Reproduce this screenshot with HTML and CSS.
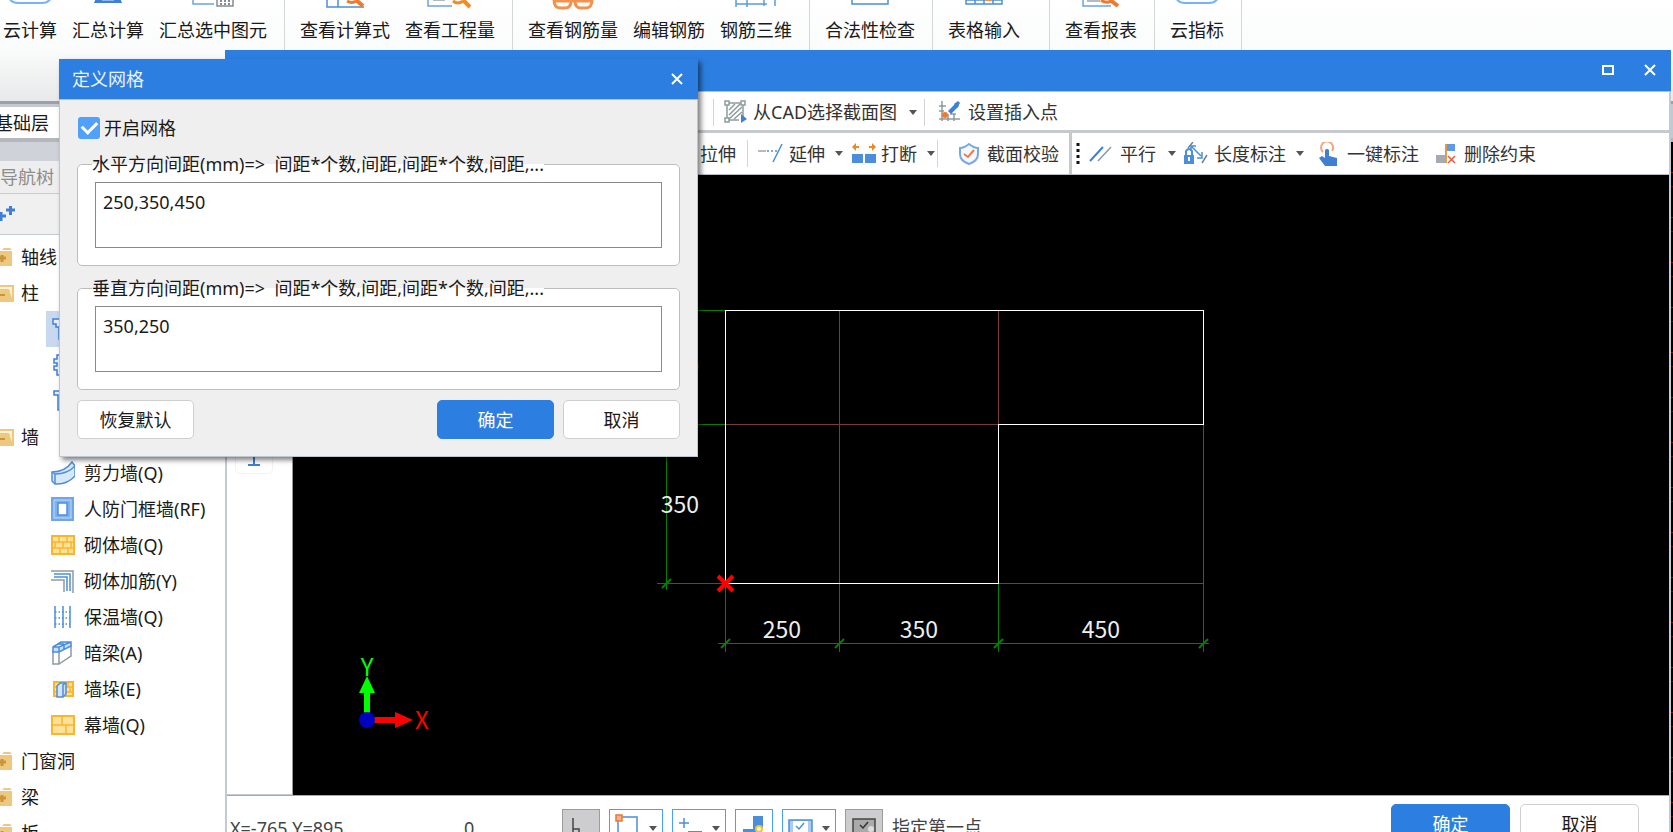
FILE: index.html
```html
<!DOCTYPE html>
<html lang="zh-CN">
<head>
<meta charset="utf-8">
<title>定义网格</title>
<link rel="stylesheet" href="styles.css">
</head>
<body>
<div class="app">
  <header class="ribbon">
    <div class="ribbon-group first">
      <button class="ribbon-btn"><svg width="46" height="10" viewBox="0 0 46 10"><path d="M1-6C2 1 6 3 11 3H35C40 3 44 1 45-6" fill="none" stroke="#74b4fb" stroke-width="2"/></svg><span>云计算</span></button>
      <button class="ribbon-btn"><svg width="30" height="10" viewBox="0 0 30 10"><path d="M3-2H27L29 3H1Z" fill="#3f80d4"/><path d="M9 0H21" stroke="#dbe9fb"/></svg><span>汇总计算</span></button>
      <button class="ribbon-btn"><svg width="42" height="10" viewBox="0 0 42 10"><path d="M1-2V4H22" fill="none" stroke="#6aa3e4" stroke-width="1.5"/><path d="M25-2V6H41V-2" fill="#fff" stroke="#858b96" stroke-width="1.5"/><path d="M28 1H38M28 4H38" stroke="#858b96" stroke-width="2" stroke-dasharray="2 2"/></svg><span>汇总选中图元</span></button>
    </div>
    <div class="ribbon-group">
      <button class="ribbon-btn"><svg width="40" height="10" viewBox="0 0 40 10"><path d="M2-2V7H39M13-2V7" fill="none" stroke="#4b8fdc" stroke-width="1.5"/><path d="M22 1Q27 4 31 1" fill="none" stroke="#ef7a2d" stroke-width="3"/><path d="M31 0L38 6" stroke="#ef7a2d" stroke-width="4"/></svg><span>查看计算式</span></button>
      <button class="ribbon-btn"><svg width="46" height="10" viewBox="0 0 46 10"><path d="M1-2V6H25" fill="none" stroke="#6aa3e4" stroke-width="1.5"/><path d="M6 0H18" stroke="#9aa3ad" stroke-width="1.5"/><path d="M26 1Q31 5 36 1" fill="none" stroke="#f08c22" stroke-width="3"/><path d="M36 0L43 7" stroke="#f08c22" stroke-width="4"/></svg><span>查看工程量</span></button>
    </div>
    <div class="ribbon-group">
      <button class="ribbon-btn"><svg width="42" height="10" viewBox="0 0 42 10"><path d="M2-1C2 6 4 8 9 8H13C18 8 19 5 19 1H23C23 5 24 8 29 8H33C38 8 40 6 40-1M2 1H40" fill="none" stroke="#f2924f" stroke-width="3"/></svg><span>查看钢筋量</span></button>
      <button class="ribbon-btn"><svg width="40" height="10" viewBox="0 0 40 10"></svg><span>编辑钢筋</span></button>
      <button class="ribbon-btn"><svg width="42" height="10" viewBox="0 0 42 10"><path d="M1 4H32M1-1V7M12-1V7M29-1V6M40-1V6" fill="none" stroke="#5b9be3" stroke-width="1.5"/></svg><span>钢筋三维</span></button>
    </div>
    <div class="ribbon-group">
      <button class="ribbon-btn"><svg width="38" height="10" viewBox="0 0 38 10"><path d="M1-2V4H37V-2" fill="none" stroke="#4b8fdc" stroke-width="1.5"/></svg><span>合法性检查</span></button>
    </div>
    <div class="ribbon-group wide">
      <button class="ribbon-btn"><svg width="38" height="10" viewBox="0 0 38 10"><path d="M1-2V4H37V-2M1 0H37M10-2V4M19-2V4M28-2V4" fill="none" stroke="#4b8fdc" stroke-width="1.5"/><path d="M20 0H27" stroke="#f2924f" stroke-width="2"/></svg><span>表格输入</span></button>
    </div>
    <div class="ribbon-group">
      <button class="ribbon-btn"><svg width="38" height="10" viewBox="0 0 38 10"><path d="M1-2V6H29" fill="none" stroke="#6aa3e4" stroke-width="1.5"/><path d="M5 1H18" stroke="#9aa3ad" stroke-width="1.5"/><path d="M19 0Q24 4 29 1" fill="none" stroke="#ef7a2d" stroke-width="3"/><path d="M28 0L36 6" stroke="#ef7a2d" stroke-width="4"/></svg><span>查看报表</span></button>
    </div>
    <div class="ribbon-group">
      <button class="ribbon-btn"><svg width="46" height="10" viewBox="0 0 46 10"><path d="M1-6C2 1 6 3 11 3H35C40 3 44 1 45-6" fill="none" stroke="#74b4fb" stroke-width="2"/></svg><span>云指标</span></button>
    </div>
  </header>

  <div class="floor-bar"><button class="floor">基础层</button></div>

  <div class="workspace">
    <nav class="sidebar">
      <div class="dock-gap"></div>
      <h2 class="nav-title">导航树</h2>
      <div class="nav-tools"><svg width="18" height="18" viewBox="0 0 18 18"><path d="M-4 12H6M1 8V17M6 6H15M10.500 2V11" stroke="#3f80d4" stroke-width="3" fill="none"/></svg></div>
      <ul class="tree">
        <li class="branch"><svg width="14" height="20" viewBox="0 0 14 20"><path d="M0 4H12V19H0ZM2 3L4 1H10L12 3Z" fill="#eec87f"/><path d="M0 11H6M2 8V15" stroke="#c8953a" stroke-width="3"/></svg>轴线</li>
        <li class="branch"><svg width="14" height="20" viewBox="0 0 14 20"><path d="M0 2H14V19H0Z" fill="#eec87f"/><path d="M0 4H12V15L9 6H0Z" fill="#fff4da"/><path d="M0 12H5" stroke="#c8953a" stroke-width="2"/></svg>柱</li>
        <li class="leaf selected" aria-label="柱"><svg width="24" height="24" viewBox="0 0 24 24"><path d="M2 2H20V7H15V22H8V10H5V7H2Z" fill="#e7f1fd" stroke="#3f80d4" stroke-width="1.5"/></svg></li>
        <li class="leaf" aria-label="构造柱"><svg width="24" height="24" viewBox="0 0 24 24"><path d="M6 2H18V7H22V17H18V22H6V17H3V13H6V10H3V6H6Z" fill="#e7f1fd" stroke="#3f80d4" stroke-width="1.500"/></svg></li>
        <li class="leaf" aria-label="砌体柱"><svg width="24" height="24" viewBox="0 0 24 24"><path d="M3 2H20V6H16V21H7V6H3Z" fill="#e7f1fd" stroke="#3f80d4" stroke-width="1.500"/></svg></li>
        <li class="branch"><svg width="14" height="20" viewBox="0 0 14 20"><path d="M0 2H14V19H0Z" fill="#eec87f"/><path d="M0 4H12V15L9 6H0Z" fill="#fff4da"/><path d="M0 12H5" stroke="#c8953a" stroke-width="2"/></svg>墙</li>
        <li class="leaf"><svg width="24" height="24" viewBox="0 0 24 24"><path d="M1 11Q14 11 21 1L24 5V15Q16 24 4 23L1 20Z" fill="#d8e8fb" stroke="#4b8fdc" stroke-width="1.500"/><path d="M1 11L4 13Q17 13 24 5M4 13V23" fill="none" stroke="#4b8fdc" stroke-width="1.500"/></svg>剪力墙(Q)</li>
        <li class="leaf"><svg width="24" height="24" viewBox="0 0 24 24"><rect width="23" height="24" fill="#6ea6ea"/><rect x="3" y="3" width="17" height="18" fill="#7fb0ee" stroke="#c3daf8"/><rect x="7" y="6" width="9" height="12" fill="#fff" stroke="#4b8fdc" stroke-width="1.500"/></svg>人防门框墙(RF)</li>
        <li class="leaf"><svg width="24" height="24" viewBox="0 0 24 24"><rect x="1" y="3" width="22" height="18" fill="#ffe19a" stroke="#fbb52c" stroke-width="2"/><path d="M1 9H23M1 15H23M8 3V9M16 3V9M4 9V15M12 9V15M20 9V15M9 15V21M17 15V21" stroke="#fbb52c" stroke-width="1.500"/></svg>砌体墙(Q)</li>
        <li class="leaf"><svg width="24" height="24" viewBox="0 0 24 24"><path d="M0 2H22V24M0 11H13V23" fill="none" stroke="#8e9a9d" stroke-width="1.500"/><path d="M3 5H19V22M3 8H16V22" fill="none" stroke="#4b8fdc" stroke-width="1.500"/></svg>砌体加筋(Y)</li>
        <li class="leaf"><svg width="24" height="24" viewBox="0 0 24 24"><path d="M4 1V23M12 1V23M19 1V23" stroke="#4b8fdc" stroke-width="1.500"/><path d="M4 7H19M4 13H19M4 19H19" stroke="#4b8fdc" stroke-width="1.500" stroke-dasharray="1.500 2"/></svg>保温墙(Q)</li>
        <li class="leaf"><svg width="24" height="24" viewBox="0 0 24 24"><path d="M2 10H8V23H2ZM8 23L20 15V4" fill="#fff" stroke="#8e9a9d" stroke-width="1.500"/><path d="M2 6L10 1H20V5L8 11H2ZM2 6H8L20 1M6 3L13 3M8 6V11M13 4V8" fill="#c9dff9" stroke="#4b8fdc" stroke-width="1.500"/></svg>暗梁(A)</li>
        <li class="leaf"><svg width="24" height="24" viewBox="0 0 24 24"><rect x="3" y="5" width="19" height="14" fill="#ffe19a" stroke="#fbb52c" stroke-width="2"/><path d="M2 10H22M2 15H22M17 5V10M19 10V15" stroke="#fbb52c" stroke-width="1.500"/><path d="M6 9L9 6H15V17L12 20H6Z" fill="#d2e4fa" stroke="#4b8fdc" stroke-width="1.500"/><path d="M12 20V8L15 6" fill="none" stroke="#4b8fdc" stroke-width="1.500"/></svg>墙垛(E)</li>
        <li class="leaf"><svg width="24" height="24" viewBox="0 0 24 24"><rect x="1" y="3" width="22" height="18" fill="#ffe19a" stroke="#fbb52c" stroke-width="2"/><path d="M1 12H23M11 3V12M15 12V21" stroke="#fbb52c" stroke-width="1.500"/></svg>幕墙(Q)</li>
        <li class="branch"><svg width="14" height="20" viewBox="0 0 14 20"><path d="M0 4H12V19H0ZM2 3L4 1H10L12 3Z" fill="#eec87f"/><path d="M0 11H6M2 8V15" stroke="#c8953a" stroke-width="3"/></svg>门窗洞</li>
        <li class="branch"><svg width="14" height="20" viewBox="0 0 14 20"><path d="M0 4H12V19H0ZM2 3L4 1H10L12 3Z" fill="#eec87f"/><path d="M0 11H6M2 8V15" stroke="#c8953a" stroke-width="3"/></svg>梁</li>
        <li class="branch"><svg width="14" height="20" viewBox="0 0 14 20"><path d="M0 4H12V19H0ZM2 3L4 1H10L12 3Z" fill="#eec87f"/><path d="M0 11H6M2 8V15" stroke="#c8953a" stroke-width="3"/></svg>板</li>
      </ul>
    </nav>
    <div class="model-view"></div>
  </div>

  <section class="editor">
    <div class="editor-title">
      <button class="win-btn" aria-label="最大化"><svg width="12" height="10" viewBox="0 0 12 10"><rect x="1" y="1" width="10" height="8" fill="none" stroke="#fff" stroke-width="2"/></svg></button>
      <button class="win-btn" aria-label="关闭"><svg width="12" height="12" viewBox="0 0 12 12"><path d="M1 1L11 11M11 1L1 11" stroke="#fff" stroke-width="2"/></svg></button>
    </div>
    <div class="toolbar upper">
      <i class="sep"></i>
      <button class="tool"><svg width="24" height="24" viewBox="0 0 24 24"><path d="M4 3H19V18M3 4V20H15" fill="none" stroke="#8e9a9d" stroke-width="1.500"/><path d="M5 10L11 4M5 15L16 4M5 19L18 7M10 19L18 12" stroke="#8e9a9d" stroke-width="1.500"/><path d="M1 1H5V5H1ZM17 1H21V5H17ZM1 18H5V22H1Z" fill="#fff" stroke="#8e9a9d" stroke-width="1.500"/><path d="M17 14L23 19L17 23Z" fill="#3f80d4"/></svg><span>从CAD选择截面图</span><b class="caret"></b></button>
      <i class="sep near"></i>
      <button class="tool insert"><svg width="24" height="24" viewBox="0 0 24 24"><path d="M4 1V21M1 6H8M1 19H22M1 11H6M10 14V21M16 14V21M12 14H18" fill="none" stroke="#8e9a9d" stroke-width="1.500"/><path d="M10 11L18 3L21 6L13 14Z" fill="#3f80d4"/><path d="M16 4L20 1L22 3L19 8Z" fill="#3f80d4"/><circle cx="7" cy="15" r="3" fill="#ef7a2d"/></svg><span>设置插入点</span></button>
    </div>
    <div class="toolbar lower">
      <button class="tool"><span>拉伸</span></button>
      <i class="sep stretch"></i>
      <button class="tool"><svg width="26" height="24" viewBox="0 0 26 24"><path d="M0 9H8" stroke="#9aa3ad" stroke-width="1.500"/><path d="M9 9H20" stroke="#4b8fdc" stroke-width="1.500" stroke-dasharray="2 2"/><path d="M24 2L15 20" stroke="#4b8fdc" stroke-width="1.500"/></svg><span>延伸</span><b class="caret"></b></button>
      <button class="tool split"><svg width="24" height="24" viewBox="0 0 24 24"><path d="M0 12H11V21H0ZM13 12H24V21H13Z" fill="#4b8fdc"/><path d="M0 5L4 1V4H7V6H4V9ZM24 5L20 1V4H17V6H20V9Z" fill="#ea8a1f"/></svg><span>打断</span><b class="caret"></b></button>
      <i class="sep close"></i>
      <button class="tool check"><svg width="24" height="24" viewBox="0 0 24 24"><path d="M12 2Q17 6 21 6V12Q21 19 12 22Q3 19 3 12V6Q7 6 12 2Z" fill="#f3f8fe" stroke="#76a9e4" stroke-width="2"/><path d="M7 12L11 15L17 8" fill="none" stroke="#f27a45" stroke-width="2"/></svg><span>截面校验</span></button>
      <i class="divider"></i>
      <svg class="grip" width="4" height="24" viewBox="0 0 4 24"><path d="M2 1V24" stroke="#111" stroke-width="3" stroke-dasharray="3 3"/></svg>
      <button class="tool parallel"><svg width="24" height="24" viewBox="0 0 24 24"><path d="M1 19L14 5" stroke="#3f80d4" stroke-width="2"/><path d="M9 19L22 5" stroke="#8e9a9d" stroke-width="1.500"/></svg><span>平行</span><b class="caret"></b></button>
      <button class="tool"><svg width="26" height="24" viewBox="0 0 26 24"><path d="M1 13H11V22H1Z" fill="#4b8fdc"/><path d="M3 13V9Q6 5 9 9V13" fill="none" stroke="#4b8fdc" stroke-width="2"/><path d="M6 15V19" stroke="#fff" stroke-width="2"/><path d="M5 6L10 0M19 21L24 13" stroke="#76818c" stroke-width="1.500"/><path d="M9 5L18 14M8 9V4H13M19 10V16H14" fill="none" stroke="#4b8fdc" stroke-width="1.500"/></svg><span>长度标注</span><b class="caret"></b></button>
      <button class="tool touch"><svg width="24" height="24" viewBox="0 0 24 24"><path d="M5 10A6 6 0 1 1 14 9" fill="none" stroke="#f5a57d" stroke-width="2"/><path d="M7 8Q9 6 11 8V14L19 16V24H7L1 16L4 14L7 16Z" fill="#3f80d4"/></svg><span>一键标注</span></button>
      <button class="tool remove"><svg width="24" height="24" viewBox="0 0 24 24"><path d="M1 13H10V21H1Z" fill="#a3a9b5"/><path d="M11 2H20V9H11Z" fill="#5b9be9"/><path d="M11 2V21" stroke="#ea9a3d" stroke-width="2"/><path d="M13 14L20 21M20 14L13 21" stroke="#ee5b3b" stroke-width="1.500"/></svg><span>删除约束</span></button>
    </div>
    <div class="editor-body">
      <div class="tool-strip">
        <button class="strip-btn" aria-label="工字截面"><svg width="14" height="24" viewBox="0 0 14 24"><path d="M1 2H13M7 2V22M1 22H13" fill="none" stroke="#3f80d4" stroke-width="2"/></svg></button>
      </div>
      <svg class="canvas" width="100%" height="100%" shape-rendering="crispEdges">
        <g fill="none" stroke="#7c3a3a" stroke-width="1">
          <path d="M546.500 135V408M705.500 135V408M910.500 249V408M432 249.500H910M705 408.500H910"/>
        </g>
        <g fill="none" stroke="#008200" stroke-width="1">
          <path d="M364 135.500H432M364 249.500H432M364 408.500H432M373.500 128V415"/>
          <path d="M432.500 408V477M546.500 408V477M705.500 408V477M910.500 408V477M425 468.500H916"/>
          <path shape-rendering="auto" stroke-width="2" d="M369 140L378 131M369 254L378 245M369 413L378 404M428 473L437 464M542 473L551 464M701 473L710 464M906 473L915 464"/>
        </g>
        <path d="M432.500 135.500H910.500V249.500H705.500V408.500H432.500Z" fill="none" stroke="#fff"/>
        <path d="M425 401L440 416M440 401L425 416" stroke="#f00" stroke-width="4" shape-rendering="auto"/>
        <g class="dim">
          <text x="387" y="200">250</text>
          <text x="387" y="338">350</text>
          <text x="489" y="463">250</text>
          <text x="626" y="463">350</text>
          <text x="808" y="463">450</text>
        </g>
        <g shape-rendering="auto">
          <path d="M71 546V518H66L74 501L82 518H77V546Z" fill="#0f0"/>
          <path d="M74 542H102V537L120 545L102 553V548H74Z" fill="#f00"/>
          <circle cx="74" cy="545" r="8" fill="#0000c0"/>
          <text class="axis-y" x="74" y="501">Y</text>
          <text class="axis-x" x="129" y="554">X</text>
        </g>
      </svg>
    </div>
    <footer class="status">
      <span class="coords">X=-765 Y=895</span>
      <span class="count">0</span>
      <div class="snap">
        <button class="snap-btn off" aria-label="正交"><svg width="22" height="28" viewBox="0 0 22 28"><path d="M3 4V20H18M3 15H9V20" fill="none" stroke="#444" stroke-width="1.500"/></svg></button>
        <button class="snap-btn drop" aria-label="捕捉"><svg width="26" height="28" viewBox="0 0 26 28"><path d="M3 26V3H22V26" fill="none" stroke="#4b8fdc" stroke-width="1.500"/><rect x="1" y="1" width="6" height="6" fill="#f7b183" stroke="#ea7a35" stroke-width="1.500"/></svg><b class="caret"></b></button>
        <button class="snap-btn drop" aria-label="偏移"><svg width="26" height="28" viewBox="0 0 26 28"><path d="M1 9H11M6 4V14" stroke="#4b8fdc" stroke-width="1.500"/><path d="M10 17H24V21H10Z" fill="#4b8fdc"/></svg><b class="caret"></b></button>
        <button class="snap-btn" aria-label="约束"><svg width="26" height="28" viewBox="0 0 26 28"><path d="M12 2H22V14H16V24H2V15H12Z" fill="#4b8fdc"/><circle cx="18" cy="15" r="3" fill="#fff6d0" stroke="#f0c43c" stroke-width="2"/></svg></button>
        <button class="snap-btn drop" aria-label="显示"><svg width="26" height="28" viewBox="0 0 26 28"><rect x="1" y="6" width="23" height="16" fill="#a9cbf5" stroke="#4b8fdc" stroke-width="1.500"/><rect x="5" y="7" width="15" height="14" fill="#fff"/><path d="M8 12L11 15L16 9" fill="none" stroke="#4b8fdc" stroke-width="1.500"/></svg><b class="caret"></b></button>
        <button class="snap-btn off" aria-label="隐藏"><svg width="26" height="28" viewBox="0 0 26 28"><rect x="2" y="5" width="22" height="16" fill="#aaa" stroke="#444" stroke-width="1.500"/><path d="M9 11L12 14L17 8" fill="none" stroke="#333" stroke-width="1.500"/><circle cx="20" cy="15" r="3" fill="#ddd"/></svg></button>
        <span class="hint">指定第一点</span>
      </div>
      <div class="status-actions">
        <button class="btn primary">确定</button>
        <button class="btn">取消</button>
      </div>
    </footer>
  </section>

  <form class="dialog" role="dialog" aria-labelledby="dialog-title">
    <div class="dialog-title">
      <h1 id="dialog-title">定义网格</h1>
      <button type="button" class="dialog-close" aria-label="关闭"><svg width="14" height="12" viewBox="0 0 14 12"><path d="M2 1L12 11M12 1L2 11" stroke="#fff" stroke-width="2"/></svg></button>
    </div>
    <div class="dialog-body">
      <label class="toggle"><input type="checkbox" checked>开启网格</label>
      <fieldset class="spacing">
        <legend><label for="horizontal">水平方向间距(mm)=&gt;&nbsp; 间距*个数,间距,间距*个数,间距,...</label></legend>
        <textarea id="horizontal">250,350,450</textarea>
      </fieldset>
      <fieldset class="spacing">
        <legend><label for="vertical">垂直方向间距(mm)=&gt;&nbsp; 间距*个数,间距,间距*个数,间距,...</label></legend>
        <textarea id="vertical">350,250</textarea>
      </fieldset>
      <div class="dialog-actions">
        <button type="button" class="btn">恢复默认</button>
        <span class="grow"></span>
        <button type="button" class="btn primary">确定</button>
        <button type="button" class="btn">取消</button>
      </div>
    </div>
  </form>
</div>
</body>
</html>
```

FILE: styles.css
```css
* { box-sizing: border-box; }

body {
  margin: 0;
  font-family: "Noto Sans", "Noto Sans CJK SC", sans-serif;
  font-size: 18px;
  line-height: 24px;
  color: #1a1a1a;
}

button, textarea, input {
  font: inherit;
  color: inherit;
}

button {
  padding: 0;
  border: 0;
  background: none;
  white-space: nowrap;
}

svg {
  display: block;
  flex: none;
  overflow: hidden;
}

.app {
  position: relative;
  display: flex;
  flex-direction: column;
  height: 100vh;
  overflow: hidden;
  background: #fff;
}

/* Ribbon */
.ribbon {
  display: flex;
  flex: none;
  height: 101px;
  background: linear-gradient(#fff, #fafbfb 50%, #e7e9ea);
}

.ribbon-group {
  display: flex;
  gap: 15px;
  padding: 0 17px 0 15px;
  border-right: 1px solid #d4d7d9;
}

.ribbon-group.first { padding-left: 3px; }
.ribbon-group.wide { padding-right: 29px; }

.ribbon-btn {
  display: flex;
  flex-direction: column;
  align-items: center;
  gap: 8px;
  height: 50px;
}

/* Floor selector */
.floor-bar {
  flex: none;
  height: 41px;
  border-top: 3px solid #9da1a6;
  border-bottom: 4px solid #b3b6bb;
  background: #c4c8d0;
}

.floor {
  display: block;
  width: 225px;
  height: 31px;
  margin-top: 3px;
  margin-left: -5px;
  background: #fff;
  text-align: left;
}

/* Navigation tree */
.workspace {
  display: flex;
  flex: 1;
  min-height: 0;
}

.sidebar {
  flex: none;
  width: 225px;
  overflow: hidden;
}

.dock-gap {
  height: 19px;
  background: #d0d2d9;
}

.nav-title {
  height: 33px;
  margin: 0;
  border-bottom: 1px solid #c9ccd2;
  background: #eee;
  font-size: 18px;
  font-weight: 400;
  line-height: 32px;
  color: #8c8c8c;
}

.nav-tools {
  height: 41px;
  padding-top: 10px;
  border-bottom: 1px solid #c3c9d3;
  background: #f0f0f0;
}

.tree {
  margin: 0;
  padding: 4px 0 0;
  list-style: none;
}

.branch, .leaf {
  display: flex;
  align-items: center;
  height: 36px;
}

.branch { gap: 7px; }

.leaf {
  gap: 9px;
  margin-left: 46px;
  padding-left: 5px;
}

.leaf.selected { background: #c7d8ef; }

.model-view {
  flex: 1;
  background: repeating-linear-gradient(#000 0 30px, #a00000 30px 31px, #000 31px 44px, #600000 44px 45px);
}

/* Section editor window */
.editor {
  position: absolute;
  top: 50px;
  right: 2px;
  bottom: -24px;
  left: 225px;
  display: flex;
  flex-direction: column;
  border: solid #c3c9d6;
  border-width: 0 2px;
  background: #fff;
}

.editor-title {
  display: flex;
  flex: none;
  justify-content: flex-end;
  align-items: center;
  gap: 30px;
  height: 42px;
  margin: 0 -2px;
  padding: 0 15px 2px 0;
  border-bottom: 1px solid #9fc3ef;
  background: #2c7fe1;
}

.win-btn {
  display: flex;
  justify-content: center;
  width: 12px;
}

.toolbar {
  display: flex;
  flex: none;
  align-items: center;
  color: #333;
}

.toolbar.upper {
  height: 41px;
  padding-top: 2px;
  padding-left: 486px;
  border-bottom: 3px solid #c6cacf;
}

.toolbar.lower {
  height: 42px;
  padding-left: 473px;
  border-bottom: 1px solid #b9bdc2;
}

.tool {
  display: flex;
  align-items: center;
  gap: 5px;
}

.sep {
  width: 1px;
  height: 27px;
  margin-right: 10px;
  background: #d2d5d8;
}

.sep.near { margin-left: 7px; }
.sep.close { margin-left: 2px; }
.sep.stretch { margin-left: 11px; }

.caret {
  flex: none;
  margin-left: 5px;
  border: 4px solid transparent;
  border-top: 5px solid #555;
  border-bottom: 0;
}

.upper .caret { margin-left: 7px; }

.insert { gap: 6px; margin-left: 3px; }
.split { margin-left: 9px; }
.check { gap: 6px; margin-left: 9px; }

.divider {
  align-self: stretch;
  width: 3px;
  margin: 0 4px 0 10px;
  background: #c6cacf;
}

.parallel { gap: 7px; margin: 0 7px 0 9px; }
.touch { margin-left: 14px; }
.remove { margin-left: 16px; }

.editor-body {
  display: flex;
  flex: 1;
  min-height: 0;
}

.tool-strip {
  flex: none;
  width: 66px;
  padding: 261px 8px 0;
  border-right: 1px solid #999;
  border-bottom: 1px solid #c3c9d3;
}

.strip-btn {
  display: flex;
  justify-content: center;
  align-items: center;
  width: 38px;
  height: 38px;
  margin: 0;
  border: 1px solid #f3f3f3;
  border-radius: 5px;
}

.canvas {
  flex: 1;
  min-width: 0;
  background: #000;
}

.dim {
  fill: #eee;
  font-family: "Noto Sans CJK SC", sans-serif;
  font-size: 23px;
  text-anchor: middle;
}

.axis-x, .axis-y {
  font-family: "Noto Sans CJK SC", sans-serif;
  font-size: 24px;
  text-anchor: middle;
}

.axis-x { fill: #f00; }
.axis-y { fill: #0f0; }

/* Status bar */
.status {
  display: flex;
  flex: none;
  align-items: flex-start;
  height: 61px;
  padding: 8px 30px 0 3px;
  border-top: 1px solid #aaa;
  color: #444;
}

.coords, .count { padding-top: 12px; }

.coords { width: 234px; }
.count { width: 98px; }

.snap {
  display: flex;
  align-items: flex-start;
  gap: 9px;
  padding-top: 5px;
}

.snap-btn {
  display: flex;
  justify-content: center;
  align-items: center;
  width: 38px;
  height: 38px;
  border: 1px solid #45a1fb;
}

.snap-btn.off {
  border-color: #9a9d9a;
  background: #cdcdcf;
}

.snap-btn.drop { width: 54px; gap: 3px; }
.hint { padding-top: 6px; }

.status-actions {
  display: flex;
  gap: 10px;
  margin-left: auto;
}

.btn {
  width: 119px;
  height: 39px;
  border: 1px solid #cfcfcf;
  border-radius: 5px;
  background: #fff;
  color: #1a1a1a;
}

.btn.primary {
  border-color: #2c7fe1;
  background: #2c7fe1;
  color: #fff;
}

/* Grid definition dialog */
.dialog {
  position: absolute;
  top: 59px;
  left: 59px;
  width: 639px;
  background: #efefef;
  box-shadow: 3px 3px 5px rgba(0, 0, 0, .5);
}

.dialog-title {
  display: flex;
  justify-content: space-between;
  align-items: center;
  height: 41px;
  padding: 0 14px 0 13px;
  border-bottom: 1px solid #9fc3ef;
  background: #2c7fe1;
}

.dialog-title h1 {
  margin: 0;
  font-size: 18px;
  font-weight: 400;
  color: #eaf2fd;
}

.dialog-body {
  padding: 16px 17px 17px;
  border: solid #bcc5d3;
  border-width: 0 1px 1px;
}

.toggle {
  display: flex;
  align-items: center;
  gap: 4px;
  height: 24px;
  margin-bottom: 12px;
  margin-left: 1px;
}

.toggle input {
  appearance: none;
  width: 22px;
  height: 22px;
  margin: 0;
  border-radius: 3px;
  background: #51a0fa;
  display: grid;
  place-items: center;
}

.toggle input:checked::before {
  content: "";
  width: 12px;
  height: 7px;
  margin-bottom: 4px;
  border: solid #fff;
  border-width: 0 0 3px 3px;
  transform: rotate(-45deg);
}

.spacing {
  min-width: 0;
  margin: 0 0 10px;
  padding: 6px 17px 17px;
  border: 1px solid #bdbdbd;
  border-radius: 5px;
  background: #fff;
}

.spacing legend {
  margin-left: -3px;
  padding: 0;
}

.spacing textarea {
  display: block;
  width: 100%;
  height: 66px;
  padding: 7px;
  border: 1px solid #8a8a8a;
  border-radius: 0;
  background: #fff;
  outline: 0;
  resize: none;
}

.dialog-actions {
  display: flex;
  gap: 9px;
}

.dialog-actions .btn { width: 117px; }

.grow { flex: 1; }
```
